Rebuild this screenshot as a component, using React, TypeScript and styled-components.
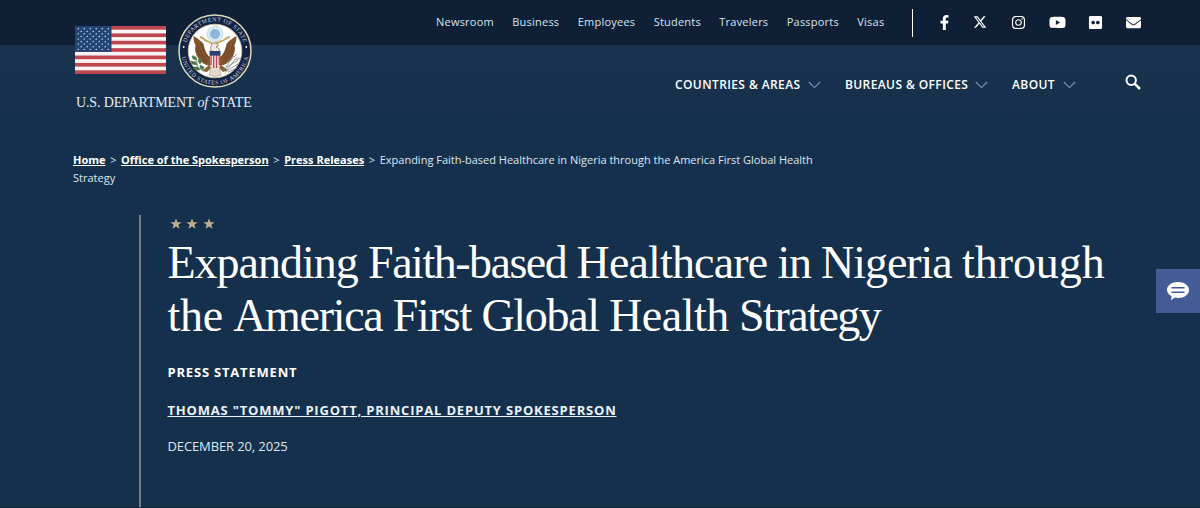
import React from "react";
import styled, { createGlobalStyle } from "styled-components";
import { FaFacebookF, FaInstagram, FaYoutube, FaFlickr, FaEnvelope } from "react-icons/fa";
import { FaXTwitter } from "react-icons/fa6";

const GlobalStyle = createGlobalStyle`
  * { box-sizing: border-box; }
  body {
    margin: 0;
    background: #15304c;
    color: #fff;
    font-family: "Open Sans", sans-serif;
    overflow: hidden;
  }
  a { color: inherit; }
`;

const Page = styled.div`
  height: 508px;
  display: flex;
  flex-direction: column;
  position: relative;
  overflow: hidden;
  border-bottom: 1px solid #10253f;
`;

const Header = styled.header`
  display: flex;
  justify-content: space-between;
  height: 120px;
  padding: 0 59px 0 75px;
  background: linear-gradient(#0f2036 0 45px, #1a324e 45px, #15304c 120px);
`;

const Brand = styled.div`
  width: 177px;
  padding-top: 13px;
`;

const Emblems = styled.div`
  display: flex;
  align-items: center;
  justify-content: space-between;
  height: 75px;
`;

const BrandName = styled.div`
  margin: 6px 0 0 1px;
  font: 14px/18px "Liberation Serif", serif;
  letter-spacing: -0.14px;
  color: #e3edf7;
  white-space: nowrap;
`;

const Menus = styled.div`
  width: 706px;
`;

const UtilityBar = styled.div`
  display: flex;
  align-items: center;
  height: 46px;
`;

const UtilityLinks = styled.nav`
  display: flex;
  gap: 18.4px;
  width: 478px;
  height: 28px;
  padding: 0 0 2px 1px;
  align-items: center;
  border-right: 1px solid #fff;
`;

const UtilityLink = styled.a`
  font-size: 11px;
  line-height: 16px;
  letter-spacing: 0.22px;
  color: #d9e3ee;
  white-space: nowrap;
`;

const SocialLinks = styled.div`
  display: grid;
  flex: 1;
  grid-template-columns: 36px 36px 40px repeat(3, 38px);
  justify-content: end;
  justify-items: center;
  align-items: center;
  margin-right: -11px;
  padding-bottom: 2px;
  svg { display: block; }
`;

const MainNav = styled.nav`
  display: flex;
  align-items: center;
  height: 77px;
  padding-left: 240px;
`;

const MenuItem = styled.a<{ $width: number }>`
  display: flex;
  align-items: center;
  justify-content: space-between;
  width: ${(p) => p.$width}px;
  margin-right: 24px;
  font-size: 12px;
  font-weight: 600;
  letter-spacing: 0.4px;
  white-space: nowrap;
  svg { flex: none; }
`;

const SearchButton = styled.span`
  display: flex;
  margin: -5px 0 0 auto;
`;

const Breadcrumb = styled.div`
  padding: 31px 0 0 73px;
  font-size: 11px;
  line-height: 18px;
  white-space: nowrap;
  color: #dce7f2;
  a { font-weight: 700; color: #fff; text-underline-offset: 1px; }
`;

const Separator = styled.span`
  margin: 0 4.65px;
`;

const Article = styled.main`
  flex: 1;
  margin: 28px 0 0 139px;
  padding: 2px 0 0 26.5px;
  border-left: 2px solid #777c7e;
`;

const Stars = styled.div`
  display: flex;
  gap: 4.5px;
  padding-left: 2px;
  height: 13px;
  align-items: center;
`;

const Title = styled.h1`
  margin: 6px 0 0;
  font: 400 46px/53px "Liberation Serif", serif;
  word-spacing: -1.2px;
  white-space: nowrap;
`;

const TitleLine = styled.span`
  display: block;
`;

const TitleWord = styled.span<{ $spacing: number }>`
  letter-spacing: ${(p) => p.$spacing}px;
`;

const Kind = styled.div`
  margin-top: 20px;
  font-size: 13px;
  line-height: 20px;
  font-weight: 700;
  letter-spacing: 0.8px;
`;

const Author = styled.a`
  display: block;
  margin-top: 18px;
  font-size: 13px;
  line-height: 20px;
  font-weight: 700;
  letter-spacing: 0.81px;
  text-decoration: underline;
  text-underline-offset: 1px;
  color: #eaf2fa;
`;

const DateLine = styled.div`
  margin-top: 16px;
  font-size: 13px;
  line-height: 20px;
  letter-spacing: -0.12px;
  color: #dce7f2;
`;

const ChatButton = styled.div`
  position: absolute;
  right: 0;
  top: 269px;
  width: 44px;
  height: 44px;
  display: flex;
  align-items: center;
  justify-content: center;
  background: #445c96;
`;

const starPath = "M0-5 1.25-1.6 4.9-1.5 2 .7 3.05 4.2 0 2.15-3.05 4.2-2 .7-4.9-1.5-1.25-1.6Z";

const FlagImage = styled.svg`
  margin-bottom: 1px;
`;

function Flag() {
  return (
    <FlagImage width="91" height="48" viewBox="0 0 91 48">
      <rect width="91" height="48" fill="#fbf4f5" />
      {Array.from({ length: 7 }, (_, i) => (
        <rect key={i} y={(i * 96) / 13} width="91" height={48 / 13} fill="#bd4650" />
      ))}
      <rect width="36.5" height={(48 * 7) / 13} fill="#204476" />
      {Array.from({ length: 9 }, (_, r) =>
        Array.from({ length: r % 2 ? 5 : 6 }, (_, c) => (
          <path
            key={`${r}-${c}`}
            d={starPath}
            fill="#e2e9f3"
            transform={`translate(${(r % 2 ? 6.2 : 3.2) + c * 6} ${2.7 + r * 2.57}) scale(.22)`}
          />
        ))
      )}
    </FlagImage>
  );
}

function Wing() {
  return (
    <g fill="#87562f">
      <path d="M34 44C29 42 27 37 25.5 30c-2-3-6-6-10-8 0 4 .5 7 2 9-1 5 0 9 2 12 2 4 6 7 9 8l4 1Z" />
      <path d="M19 28c1 7 5 13 10 18M23 29c1 6 4 11 8 15M18 33c2 7 6 12 11 15" stroke="#4d321f" strokeWidth=".6" fill="none" />
    </g>
  );
}

function Seal() {
  return (
    <svg width="74" height="74" viewBox="0 0 74 74">
      <defs>
        <path id="sealTop" d="M7.5 37a29.5 29.5 0 0 1 59 0" />
        <path id="sealBottom" d="M3.2 37a33.8 33.8 0 0 0 67.6 0" />
      </defs>
      <circle cx="37" cy="37" r="36" fill="#142343" stroke="#dcdcba" strokeWidth="1.5" />
      <circle cx="37" cy="37" r="26.8" fill="#fff" stroke="#cfcba6" strokeWidth=".8" />
      <g fill="#c9d2df" fontFamily="Liberation Serif, serif" fontSize="6" textAnchor="middle">
        <text><textPath href="#sealTop" startOffset="50%" textLength="76">DEPARTMENT OF STATE</textPath></text>
        <text><textPath href="#sealBottom" startOffset="50%" textLength="94">UNITED STATES OF AMERICA</textPath></text>
      </g>
      <circle cx="5.7" cy="33" r=".9" fill="#fff" />
      <circle cx="68.3" cy="33" r=".9" fill="#fff" />
      <circle cx="37" cy="20" r="7.8" fill="#dceaf5" stroke="#a9c9e5" strokeWidth="1" strokeDasharray="1.5 .8" />
      <circle cx="37" cy="20" r="4.6" fill="#8eb4da" stroke="#6f9cca" strokeWidth=".7" strokeDasharray="1 .6" />
      <path d="M22 23c3 0 4 3 7 4s5 3 7 3 5-2 8-3 5-4 8-4" fill="none" stroke="#c9ab62" strokeWidth="2" />
      <Wing />
      <g transform="translate(74 0) scale(-1 1)"><Wing /></g>
      <path d="M31 51 24 57l5 1 4-4M43 51l7 5-5 2-4-4" fill="#8a6136" />
      <path d="m33 52-2 9q6 3 12 0l-2-9Z" fill="#e2d9d0" stroke="#9b8978" strokeWidth=".5" />
      <path d="M33 37c-1-4 0-8 4-8 2 0 3 1 3 2l-2 2c3 1 4 2 3 5Z" fill="#eee9df" stroke="#7b6147" strokeWidth=".7" />
      <path d="M39 30.5l2.6 1.2-2.5 1Z" fill="#d7a53c" />
      <path d="M32 37h10v12q-1 4-5 6-4-2-5-6Z" fill="#f2e7e6" />
      <path d="M33 41v10M35.7 41v13M38.5 41v13M41.2 41v10" stroke="#b64751" strokeWidth="1.35" />
      <path d="M31.5 37h11v4.6h-11Z" fill="#273f78" />
      <g stroke="#4d7348" fill="#4f7548" strokeWidth=".6">
        <path d="M15 41q5 6 5 13l6 3" fill="none" />
        <path d="m14 42 4 1 1 3-4-1ZM13 47l5 1 1 3-5-1ZM21 44l3 3-2 3-2-3ZM15 53l5 0 2 3-5 0ZM22 51l4 2-1 3-3-2Z" />
      </g>
      <g stroke="#858984" strokeWidth=".8" fill="none">
        <path d="m48 57 11-14M46 55l14-9M47 58l13-8M48 53l8-11M50 58l9-4" />
        <path d="m56 43 3-3M58 46l4-2M58 51l3-1" />
      </g>
    </svg>
  );
}

const Chevron = () => (
  <svg width="13" height="8" viewBox="0 0 13 8" fill="none" stroke="#7e98b1" strokeWidth="1.1">
    <path d="m.8 1 5.7 5.6L12.2 1" />
  </svg>
);

const menu = [
  { label: "COUNTRIES & AREAS", width: 146 },
  { label: "BUREAUS & OFFICES", width: 143 },
  { label: "ABOUT", width: 64 },
];

const trail = ["Home", "Office of the Spokesperson", "Press Releases"];

const headline: [string, number][][] = [
  [["Expanding", -1], ["Faith-based", -1.5], ["Healthcare", -0.85], ["in", -1.3], ["Nigeria", -1.05], ["through", -0.05]],
  [["the", -0.3], ["America", -1.3], ["First", -1.2], ["Global", -1.3], ["Health", -0.5], ["Strategy", -1.5]],
];

export default function App() {
  return (
    <Page>
      <GlobalStyle />
      <Header>
        <Brand>
          <Emblems><Flag /><Seal /></Emblems>
          <BrandName>U.S. DEPARTMENT <i>of</i> STATE</BrandName>
        </Brand>
        <Menus>
          <UtilityBar>
            <UtilityLinks>
              {["Newsroom", "Business", "Employees", "Students", "Travelers", "Passports", "Visas"].map((t) => (
                <UtilityLink key={t}>{t}</UtilityLink>
              ))}
            </UtilityLinks>
            <SocialLinks>
              <FaFacebookF size={15} />
              <FaXTwitter size={14} />
              <FaInstagram size={15} />
              <FaYoutube size={17} />
              <FaFlickr size={15} />
              <FaEnvelope size={15} />
            </SocialLinks>
          </UtilityBar>
          <MainNav>
            {menu.map((m) => (
              <MenuItem key={m.label} $width={m.width}>{m.label}<Chevron /></MenuItem>
            ))}
            <SearchButton>
              <svg width="16" height="16" viewBox="0 0 16 16" fill="none" stroke="#fff">
                <circle cx="6.2" cy="6.2" r="4.7" strokeWidth="2" />
                <path d="m9.6 9.6 5.4 5.4" strokeWidth="2.5" />
              </svg>
            </SearchButton>
          </MainNav>
        </Menus>
      </Header>
      <Breadcrumb>
        {trail.map((t) => (
          <React.Fragment key={t}><a href="#">{t}</a><Separator>&gt;</Separator></React.Fragment>
        ))}
        <span>Expanding Faith-based Healthcare in Nigeria through the America First Global Health<br />Strategy</span>
      </Breadcrumb>
      <Article>
        <Stars>
          {[0, 1, 2].map((i) => (
            <svg key={i} width="12" height="12" viewBox="-5.2 -5.2 10.4 10.4"><path d={starPath} fill="#bfae91" /></svg>
          ))}
        </Stars>
        <Title>
          {headline.map((line, n) => (
            <TitleLine key={n}>
              {line.map(([word, spacing]) => (
                <React.Fragment key={word}><TitleWord $spacing={spacing}>{word}</TitleWord>{" "}</React.Fragment>
              ))}
            </TitleLine>
          ))}
        </Title>
        <Kind>PRESS STATEMENT</Kind>
        <Author>THOMAS "TOMMY" PIGOTT, PRINCIPAL DEPUTY SPOKESPERSON</Author>
        <DateLine>DECEMBER 20, 2025</DateLine>
      </Article>
      <ChatButton>
        <svg width="24" height="20" viewBox="0 0 24 20">
          <path d="M12 1c6.2 0 11 3.4 11 8s-4.8 8-11 8c-1.2 0-2.3-.1-3.4-.4L5 19.2l.6-4C2.8 13.8 1 11.6 1 9c0-4.6 4.8-8 11-8Z" fill="#fff" />
          <path d="M5.5 6.8h13M5.5 11.3h13" stroke="#445c96" strokeWidth="1.6" />
        </svg>
      </ChatButton>
    </Page>
  );
}
